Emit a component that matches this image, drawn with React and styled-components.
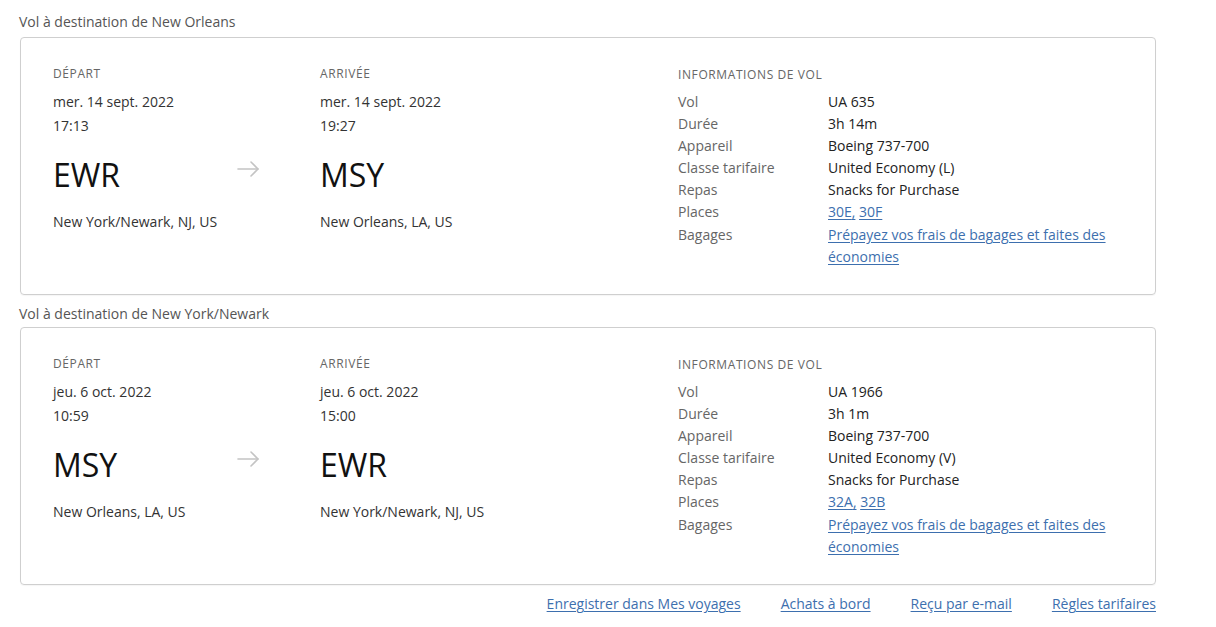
import React from "react";
import styled, { createGlobalStyle } from "styled-components";

const GlobalStyle = createGlobalStyle`
  html, body {
    margin: 0;
    padding: 0;
    background: #fff;
  }
  body {
    font-family: "Open Sans", "Liberation Sans", sans-serif;
    color: #333;
  }
`;

const flights = [
  {
    title: "Vol à destination de New Orleans",
    dep: { date: "mer. 14 sept. 2022", time: "17:13", code: "EWR", city: "New York/Newark, NJ, US" },
    arr: { date: "mer. 14 sept. 2022", time: "19:27", code: "MSY", city: "New Orleans, LA, US" },
    info: {
      vol: "UA 635",
      duree: "3h 14m",
      appareil: "Boeing 737-700",
      classe: "United Economy (L)",
      repas: "Snacks for Purchase",
      seats: ["30E", "30F"],
    },
  },
  {
    title: "Vol à destination de New York/Newark",
    dep: { date: "jeu. 6 oct. 2022", time: "10:59", code: "MSY", city: "New Orleans, LA, US" },
    arr: { date: "jeu. 6 oct. 2022", time: "15:00", code: "EWR", city: "New York/Newark, NJ, US" },
    info: {
      vol: "UA 1966",
      duree: "3h 1m",
      appareil: "Boeing 737-700",
      classe: "United Economy (V)",
      repas: "Snacks for Purchase",
      seats: ["32A", "32B"],
    },
  },
];

const ArrowIcon = () => (
  <svg width="24" height="24" viewBox="0 0 24 24" fill="none" stroke="#c4c4c4" strokeWidth="1.6" strokeLinecap="round" strokeLinejoin="round">
    <path d="M2 12h20" />
    <path d="M15 5l7 7-7 7" />
  </svg>
);

const FlightCard = ({ flight }) => (
  <>
    <SectionTitle>{flight.title}</SectionTitle>
    <Card>
      <Column>
        <Label>Départ</Label>
        <DateText>{flight.dep.date}</DateText>
        <DateText>{flight.dep.time}</DateText>
        <CodeRow>
          <Code>{flight.dep.code}</Code>
          <Arrow>
            <ArrowIcon />
          </Arrow>
        </CodeRow>
        <City>{flight.dep.city}</City>
      </Column>
      <Column>
        <Label>Arrivée</Label>
        <DateText>{flight.arr.date}</DateText>
        <DateText>{flight.arr.time}</DateText>
        <CodeRow>
          <Code>{flight.arr.code}</Code>
        </CodeRow>
        <City>{flight.arr.city}</City>
      </Column>
      <Column $offset>
        <Label>Informations de vol</Label>
        <InfoGrid>
          <InfoKey>Vol</InfoKey>
          <InfoValue>{flight.info.vol}</InfoValue>
          <InfoKey>Durée</InfoKey>
          <InfoValue>{flight.info.duree}</InfoValue>
          <InfoKey>Appareil</InfoKey>
          <InfoValue>{flight.info.appareil}</InfoValue>
          <InfoKey>Classe tarifaire</InfoKey>
          <InfoValue>{flight.info.classe}</InfoValue>
          <InfoKey>Repas</InfoKey>
          <InfoValue>{flight.info.repas}</InfoValue>
          <InfoKey>Places</InfoKey>
          <InfoValue>
            <Link href="#">{flight.info.seats[0]},</Link> <Link href="#">{flight.info.seats[1]}</Link>
          </InfoValue>
          <InfoKey $gap>Bagages</InfoKey>
          <InfoValue $gap>
            <Link href="#">Prépayez vos frais de bagages et faites des économies</Link>
          </InfoValue>
        </InfoGrid>
      </Column>
    </Card>
  </>
);

export default function App() {
  return (
    <Page>
      <GlobalStyle />
      {flights.map((f) => (
        <FlightCard key={f.title} flight={f} />
      ))}
      <Footer>
        <Link href="#">Enregistrer dans Mes voyages</Link>
        <Link href="#">Achats à bord</Link>
        <Link href="#">Reçu par e-mail</Link>
        <Link href="#">Règles tarifaires</Link>
      </Footer>
    </Page>
  );
}

const Page = styled.div`
  width: 1136px;
  padding: 12px 0 0 20px;
`;

const SectionTitle = styled.div`
  font-size: 14px;
  line-height: 20px;
  color: #555;
  margin: 0 0 5px -1px;
  &:not(:first-child) {
    margin-top: 9px;
    margin-bottom: 3px;
  }
`;

const Card = styled.div`
  display: grid;
  grid-template-columns: 267px 358px 1fr;
  border: 1px solid #cfcfcf;
  border-radius: 4px;
  padding: 28px 32px 26px;
  box-shadow: 0 1px 1px rgba(0, 0, 0, 0.04);
`;

const Column = styled.div`
  display: flex;
  flex-direction: column;
  margin-top: ${(p) => (p.$offset ? "1px" : "0")};
`;

const Label = styled.div`
  font-size: 12px;
  line-height: 16px;
  letter-spacing: 0.6px;
  text-transform: uppercase;
  color: #666;
  margin-bottom: 8px;
`;

const DateText = styled.div`
  font-size: 14px;
  line-height: 24px;
  color: #333;
`;

const CodeRow = styled.div`
  display: flex;
  align-items: center;
  margin-top: 17px;
  height: 40px;
`;

const Code = styled.div`
  font-size: 32px;
  line-height: 40px;
  color: #111;
`;

const Arrow = styled.span`
  display: flex;
  margin-left: auto;
  margin-right: 60px;
  margin-top: -12px;
`;

const City = styled.div`
  font-size: 14px;
  line-height: 24px;
  margin-top: 15px;
  color: #333;
`;

const InfoGrid = styled.div`
  display: grid;
  grid-template-columns: 150px 290px;
  font-size: 14px;
  line-height: 22px;
`;

const InfoKey = styled.div`
  color: #666;
  margin-top: ${(p) => (p.$gap ? "1px" : "0")};
`;

const InfoValue = styled.div`
  color: #222;
  margin-top: ${(p) => (p.$gap ? "1px" : "0")};
`;

const Link = styled.a`
  color: #3d6fae;
  text-decoration: underline;
  text-underline-offset: 2px;
`;

const Footer = styled.div`
  display: flex;
  justify-content: flex-end;
  gap: 40px;
  margin-top: 9px;
  font-size: 14px;
  line-height: 20px;
`;
